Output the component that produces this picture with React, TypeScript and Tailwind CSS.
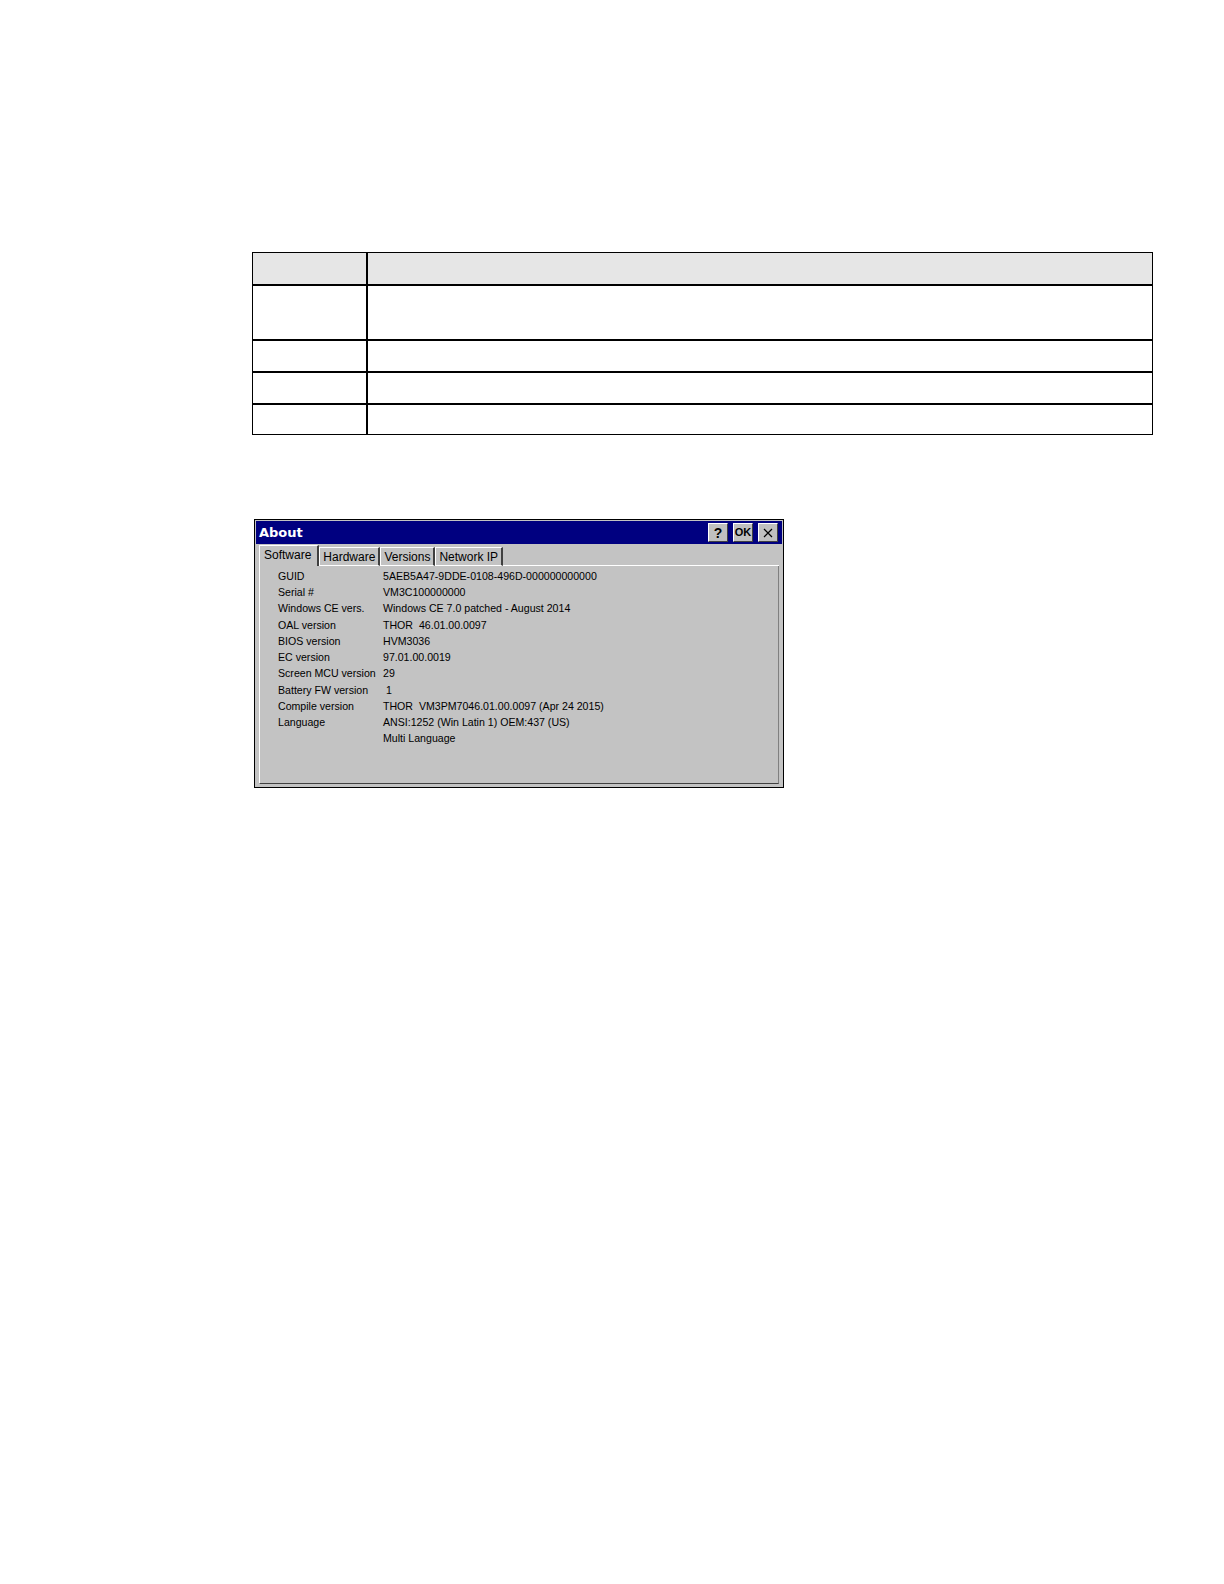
import React from 'react';

const rows: [string, string][] = [
  ['GUID', '5AEB5A47-9DDE-0108-496D-000000000000'],
  ['Serial #', 'VM3C100000000'],
  ['Windows CE vers.', 'Windows CE 7.0 patched - August 2014'],
  ['OAL version', 'THOR  46.01.00.0097'],
  ['BIOS version', 'HVM3036'],
  ['EC version', '97.01.00.0019'],
  ['Screen MCU version', '29'],
  ['Battery FW version', ' 1'],
  ['Compile version', 'THOR  VM3PM7046.01.00.0097 (Apr 24 2015)'],
  ['Language', 'ANSI:1252 (Win Latin 1) OEM:437 (US)'],
  ['', 'Multi Language'],
];

const tabs = ['Software', 'Hardware', 'Versions', 'Network IP'];

function TitleButton({ children }: { children: React.ReactNode }) {
  return (
    <div className="w-[20px] h-[19px] bg-[#c0c0c0] border-t border-l border-t-white border-l-white border-r border-b border-r-[#404040] border-b-[#404040] flex items-center justify-center text-black leading-none">
      {children}
    </div>
  );
}

export default function App() {
  return (
    <div className="bg-white pt-[252px] pl-[252px]" style={{ fontFamily: '"Liberation Sans", Arial, sans-serif' }}>
      {/* Empty table */}
      <div className="w-[901px] border-t border-l border-black">
        {[33, 55, 32, 32, 30].map((h, i) => (
          <div key={i} className={`flex ${i === 0 ? 'bg-[#e6e6e6]' : 'bg-white'} ${i === 4 ? 'border-b border-black' : 'border-b-2 border-black'}`} style={{ height: h }}>
            <div className="w-[115px] border-r-2 border-black" />
            <div className="flex-1 border-r border-black" />
          </div>
        ))}
      </div>

      {/* About dialog */}
      <div className="mt-[84px] ml-[2px] w-[530px] h-[269px] border border-black bg-[#c3c3c3] p-px flex flex-col">
        <div className="h-[23px] bg-[#000080] flex items-center justify-between pl-[3px] pr-[4px]">
          <span className="text-white font-bold text-[13px]" style={{ fontFamily: '"DejaVu Sans", sans-serif' }}>About</span>
          <div className="flex gap-[5px]">
            <TitleButton><span className="text-[14px] font-bold">?</span></TitleButton>
            <TitleButton><span className="text-[11px] font-bold">OK</span></TitleButton>
            <TitleButton>
              <svg width="10" height="10" viewBox="0 0 10 10">
                <path d="M1 1L9 9M9 1L1 9" stroke="#000" strokeWidth="1.2" fill="none" />
              </svg>
            </TitleButton>
          </div>
        </div>
        <div className="flex-1 flex flex-col px-[3px] pb-[2px]">
          <div className="flex items-end h-[22px] pt-[1px]">
            {tabs.map((t, i) => (
              <div
                key={t}
                className={`text-[12px] leading-none text-black border-white border-l border-t border-r-2 border-r-[#404040] ${i === 0 ? 'h-[21px] pt-[3px] pl-[4px] pr-[6px] text-[12.5px]' : 'h-[19px] pt-[3px] px-[3px] border-b border-b-white'}`}
              >
                {t}
              </div>
            ))}
            <div className="flex-1 border-b border-white h-px" />
          </div>
          <div className="flex-1 border-l border-white border-r border-r-[#808080] border-b border-b-[#404040] pt-[2px] pl-[18px]">
            {rows.map(([k, v], i) => (
              <div key={i} className="flex h-[16.25px] items-center text-[10.6px] text-black leading-none">
                <span className="w-[105px] whitespace-pre">{k}</span>
                <span className="whitespace-pre">{v}</span>
              </div>
            ))}
          </div>
        </div>
      </div>
    </div>
  );
}
